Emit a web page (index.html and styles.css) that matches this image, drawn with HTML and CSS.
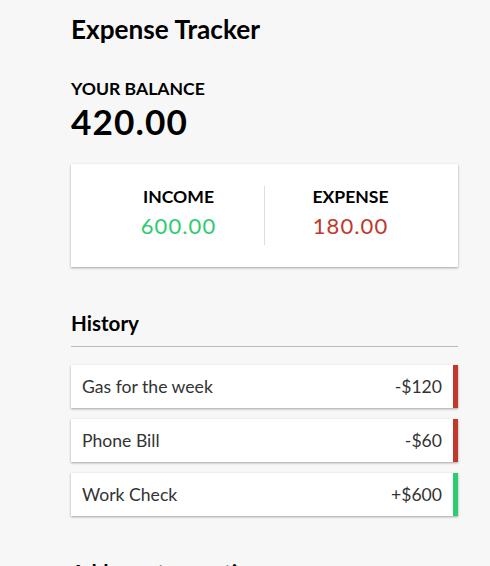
FILE: index.html
```html
<!DOCTYPE html>
<html lang="en">
<head>
<meta charset="UTF-8">
<title>Expense Tracker</title>
<link rel="stylesheet" href="styles.css">
</head>
<body>
  <div class="container">
    <h2 class="title">Expense Tracker</h2>
    <h4 class="label">Your Balance</h4>
    <h1 class="balance">420.00</h1>

    <div class="inc-exp">
      <div class="inc-exp-col">
        <h4 class="label">Income</h4>
        <p class="money plus">600.00</p>
      </div>
      <div class="inc-exp-col">
        <h4 class="label">Expense</h4>
        <p class="money minus">180.00</p>
      </div>
    </div>

    <h3 class="section">History</h3>
    <ul class="list">
      <li class="item minus"><span>Gas for the week</span><span>-$120</span></li>
      <li class="item minus"><span>Phone Bill</span><span>-$60</span></li>
      <li class="item plus"><span>Work Check</span><span>+$600</span></li>
    </ul>

    <h3 class="section">Add new transaction</h3>
  </div>
</body>
</html>
```
FILE: styles.css
```css
* {
  box-sizing: border-box;
}

body {
  margin: 0;
  background-color: #f7f7f7;
  font-family: Lato, "Liberation Sans", sans-serif;
  color: #000;
}

.container {
  width: 387px;
  margin: 13.5px 0 0 71px;
}

.title {
  margin: 0;
  font-size: 26.2px;
  font-weight: 700;
  letter-spacing: 0;
  line-height: 1.2;
}

.label {
  margin: 0;
  font-size: 17.6px;
  font-weight: 700;
  text-transform: uppercase;
  line-height: 1.2;
}

.title + .label {
  margin-top: 33px;
}

.balance {
  margin: 1px 0 0;
  font-size: 35.2px;
  font-weight: 700;
  letter-spacing: 1.1px;
  line-height: 1.2;
}

.inc-exp {
  display: flex;
  justify-content: space-between;
  background-color: #fff;
  box-shadow: 0 1px 3px rgba(0, 0, 0, 0.12), 0 1px 2px rgba(0, 0, 0, 0.24);
  padding: 22px;
  margin: 22px 0;
}

.inc-exp-col {
  flex: 1;
  text-align: center;
}

.inc-exp-col:first-child {
  border-right: 1px solid #dedede;
}

.money {
  font-size: 22px;
  letter-spacing: 1.1px;
  margin: 5.5px 0;
  line-height: 1.2;
}

.money.plus {
  color: #2ecc71;
}

.money.minus {
  color: #c0392b;
}

.section {
  margin: 44px 0 11px;
  padding-bottom: 11px;
  border-bottom: 1px solid #bbb;
  font-size: 20.6px;
  font-weight: 700;
  line-height: 1.2;
}

.list {
  list-style: none;
  padding: 0;
  margin: 17.2px 0 43px;
}

.item {
  display: flex;
  justify-content: space-between;
  background-color: #fff;
  box-shadow: 0 1px 3px rgba(0, 0, 0, 0.12), 0 1px 2px rgba(0, 0, 0, 0.24);
  color: #333;
  font-size: 17.6px;
  line-height: 1.2;
  padding: 11px;
  margin: 11px 0;
}

.item.plus {
  border-right: 5px solid #2ecc71;
}

.item.minus {
  border-right: 5px solid #c0392b;
}
```
